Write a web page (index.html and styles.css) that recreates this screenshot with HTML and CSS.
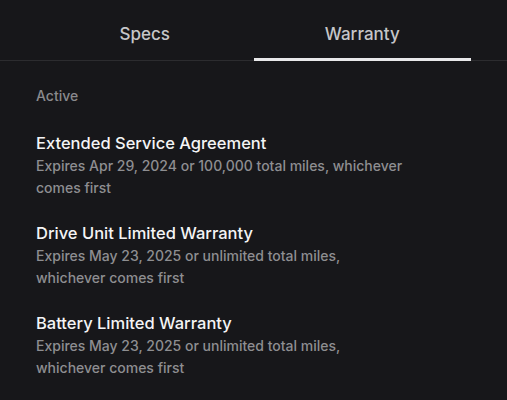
FILE: index.html
```html
<!DOCTYPE html>
<html lang="en">
<head>
    <meta charset="UTF-8">
    <meta name="viewport" content="width=device-width, initial-scale=1.0">
    <title>Warranty</title>
    <link rel="stylesheet" href="styles.css">
</head>
<body>

    <nav class="tabs">
        <div class="tab">Specs</div>
        <div class="tab active">Warranty</div>
    </nav>

    <main class="content">
        <h2 class="section-label">Active</h2>

        <ul class="warranty-list">
            <li class="warranty-item">
                <h3>Extended Service Agreement</h3>
                <p>Expires Apr 29, 2024 or 100,000 total miles, whichever comes first</p>
            </li>
            <li class="warranty-item">
                <h3>Drive Unit Limited Warranty</h3>
                <p>Expires May 23, 2025 or unlimited total miles, whichever comes first</p>
            </li>
            <li class="warranty-item">
                <h3>Battery Limited Warranty</h3>
                <p>Expires May 23, 2025 or unlimited total miles, whichever comes first</p>
            </li>
        </ul>
    </main>

</body>
</html>
```

FILE: styles.css
```css
* {
    margin: 0;
    padding: 0;
    box-sizing: border-box;
    font-family: 'Inter', 'Noto Sans', sans-serif;
}

body {
    background: #17171a;
    color: #f2f2f2;
    min-height: 100vh;
}

.tabs {
    display: flex;
    padding: 0 36px;
    border-bottom: 1px solid #2c2c2f;
}

.tab {
    flex: 1;
    text-align: center;
    font-size: 17px;
    font-weight: 500;
    color: #c6c6c8;
    height: 61px;
    padding-top: 24px;
    border-bottom: 3px solid transparent;
    margin-bottom: -1px;
}

.tab.active {
    border-bottom-color: #e8e8ea;
}

.content {
    padding: 26px 36px 0;
}

.section-label {
    font-size: 14px;
    font-weight: 500;
    color: #8a8a8d;
    margin-bottom: 27px;
}

.warranty-list {
    list-style: none;
}

.warranty-item {
    margin-bottom: 22px;
}

.warranty-item h3 {
    font-size: 16.5px;
    font-weight: 500;
    color: #f4f4f5;
    line-height: 24px;
}

.warranty-item p {
    font-size: 14px;
    font-weight: 500;
    color: #8e8e91;
    line-height: 22px;
    max-width: 370px;
}
```
